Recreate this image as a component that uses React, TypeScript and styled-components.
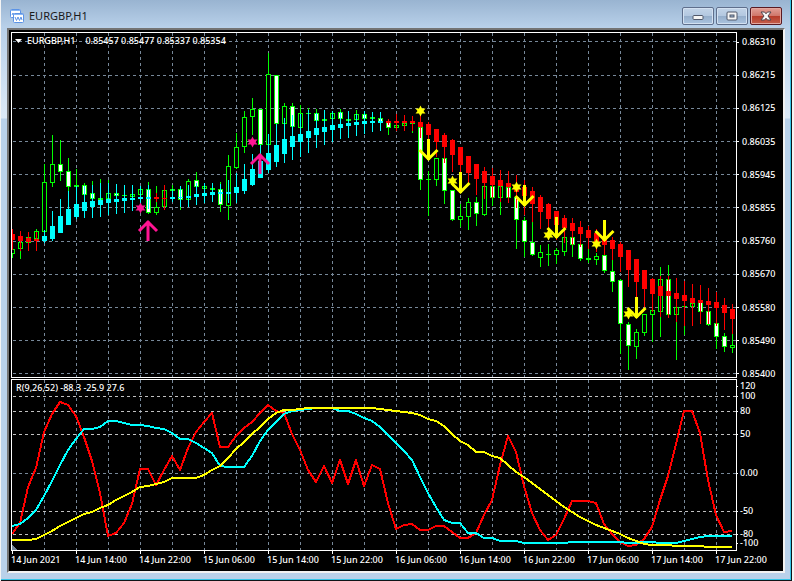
import React from 'react';
import styled, { createGlobalStyle, css } from 'styled-components';

const GlobalStyle = createGlobalStyle`
  * { box-sizing: border-box; }
  body { margin: 0; background: #f0f0f0; }
`;

const uiFont = css`
  font-family: 'Noto Sans', 'Open Sans', sans-serif;
`;

const Desktop = styled.div`
  ${uiFont}
  height: 100vh;
  min-height: 400px;
  padding: 0 2px 0 1px;
  background: #f4f4f4;
`;

const WindowFrame = styled.section`
  display: flex;
  flex-direction: column;
  height: 100%;
  border-right: 1px solid #101418;
  border-bottom: 1px solid #101418;
`;

const WindowBody = styled.div`
  flex: 1;
  min-height: 0;
  display: flex;
  flex-direction: column;
  padding: 0 6px 6px;
  border-right: 1px solid #35c5e8;
  border-bottom: 1px solid #35c5e8;
  background: linear-gradient(#9ab5d2 0, #b9d1ea 30px, #d6e5f5 100px, #dce9f7 118px, #b9d1ea 119px);
`;

const TitleBar = styled.header`
  display: flex;
  align-items: center;
  gap: 5px;
  height: 28px;
  margin: 0 -6px;
  padding: 4px 8px 0 9px;
  background: linear-gradient(#99b4d1, #b9d1ea);
`;

const Title = styled.h1`
  flex: 1;
  margin: 0;
  font-size: 11px;
  line-height: 16px;
  font-weight: 400;
  color: #1a1a1a;
`;

const Buttons = styled.div`
  display: flex;
  gap: 2px;
`;

const WindowButton = styled.button<{ $danger?: boolean }>`
  display: grid;
  place-items: center;
  width: 32px;
  height: 18px;
  padding: 0;
  border: 1px solid ${p => (p.$danger ? '#5a1a22' : '#5f6f8c')};
  border-radius: 2px;
  box-shadow: inset 0 0 0 1px ${p => (p.$danger ? '#e3a79f' : '#d3e1f1')};
  background: ${p =>
    p.$danger
      ? 'linear-gradient(#e2a097 0, #d0776b 48%, #b63a28 50%, #c4604c 100%)'
      : 'linear-gradient(#c3d4e8 0, #b3c8e0 48%, #94adca 50%, #abc4e0 100%)'};
`;

const Terminal = styled.main`
  flex: 1;
  min-height: 0;
  margin-right: -1px;
  display: grid;
  grid-template-columns: minmax(0, 1fr) 46px;
  grid-template-rows: 346fr 173fr 20px;
  padding: 2px 0 0 2px;
  border: 2px solid #747474;
  border-right-color: #f2f2f2;
  border-bottom-color: #f2f2f2;
  background: #000;
  color: #fff;
  font-size: 9px;
  font-weight: 500;
`;

const Pane = styled.figure<{ $spaced?: boolean }>`
  position: relative;
  min-height: 0;
  margin: ${p => (p.$spaced ? '1px 0 0' : '0')};
`;

const Plot = styled.svg`
  display: block;
  width: 100%;
  height: 100%;
`;

const Caption = styled.figcaption<{ $left: number }>`
  position: absolute;
  top: 2px;
  left: ${p => p.$left}px;
  display: flex;
  align-items: center;
  gap: 5px;
  line-height: 13px;
  white-space: nowrap;
`;

const Quotes = styled.span`
  padding-left: 5px;
`;

const PriceAxis = styled.ol`
  display: flex;
  flex-direction: column;
  justify-content: space-between;
  min-height: 0;
  margin: 0 0 -2px;
  padding: 4px 0 0;
  list-style: none;
  line-height: 12px;
`;

const Tick = styled.li<{ $long?: boolean }>`
  display: flex;
  align-items: center;
  gap: ${p => (p.$long ? 3 : 2)}px;
  height: 12px;

  &::before {
    content: '';
    width: ${p => (p.$long ? 2 : 1)}px;
    height: 1px;
    background: #fff;
  }
`;

const LevelAxis = styled(PriceAxis)`
  display: grid;
  grid-template-rows:
    minmax(0, 10fr) minmax(0, 15fr) minmax(0, 23fr) minmax(0, 39fr)
    minmax(0, 38fr) minmax(0, 23fr) minmax(0, 9fr) minmax(0, 14fr);
  margin: 0;
  padding: 2px 0 0;
`;

const TimeAxis = styled.ol`
  grid-column: 1 / -1;
  display: grid;
  grid-template-columns: repeat(12, minmax(0, 1fr));
  margin: 0;
  padding: 0 4px 0 0;
  list-style: none;
  line-height: 12px;
  white-space: nowrap;
`;

const TimeTick = styled.li`
  &::before {
    content: '';
    display: block;
    width: 1px;
    height: 3px;
    margin-left: 1px;
    background: #fff;
  }
`;

type Kind = 'h' | 'f' | 'd';
/* price: kind, high, top, bottom, low - trend: colour, high, top, bottom, low */
type Bar = [Kind, number, number, number, number, 'c' | 'r', number, number, number, number];

const bars: Bar[] = [
  ['h', 249, 249, 254, 257, 'r', 229, 234, 240, 250],
  ['h', 242, 242, 249, 258, 'r', 231, 236, 241, 251],
  ['h', 237, 237, 243, 243, 'r', 232, 238, 242, 251],
  ['h', 229, 231, 239, 243, 'r', 232, 239, 241, 251],
  ['h', 164, 182, 232, 232, 'c', 230, 236, 241, 243],
  ['h', 135, 164, 183, 186, 'c', 211, 226, 239, 241],
  ['f', 140, 164, 172, 180, 'c', 199, 216, 233, 233],
  ['f', 158, 171, 187, 191, 'c', 191, 209, 225, 225],
  ['d', 169, 185, 187, 187, 'c', 186, 204, 217, 219],
  ['f', 183, 185, 195, 195, 'c', 186, 202, 211, 218],
  ['f', 181, 193, 199, 199, 'c', 185, 201, 207, 218],
  ['d', 179, 198, 200, 200, 'c', 183, 200, 205, 217],
  ['h', 180, 193, 199, 199, 'c', 183, 199, 203, 215],
  ['f', 193, 193, 196, 196, 'c', 184, 199, 202, 214],
  ['d', 195, 195, 196, 196, 'c', 185, 198, 201, 213],
  ['h', 194, 194, 197, 197, 'c', 185, 198, 200, 211],
  ['h', 189, 189, 195, 195, 'c', 186, 197, 199, 211],
  ['f', 182, 189, 213, 213, 'c', 185, 197, 199, 209],
  ['h', 186, 207, 213, 214, 'r', 193, 197, 199, 202],
  ['h', 190, 190, 207, 207, 'r', 185, 198, 199, 210],
  ['d', 185, 189, 191, 191, 'c', 189, 197, 199, 202],
  ['f', 189, 189, 200, 209, 'c', 186, 197, 198, 207],
  ['h', 179, 181, 200, 200, 'c', 185, 196, 198, 207],
  ['f', 172, 180, 187, 187, 'c', 183, 194, 197, 205],
  ['h', 186, 186, 189, 189, 'c', 183, 193, 196, 203],
  ['d', 188, 188, 190, 190, 'c', 183, 192, 195, 202],
  ['f', 182, 189, 205, 211, 'c', 184, 192, 194, 202],
  ['h', 155, 166, 206, 219, 'c', 180, 192, 194, 203],
  ['h', 133, 147, 168, 168, 'c', 173, 187, 193, 203],
  ['h', 111, 117, 147, 152, 'c', 164, 179, 191, 194],
  ['h', 98, 109, 117, 134, 'c', 154, 169, 185, 186],
  ['f', 109, 109, 145, 145, 'c', 145, 161, 178, 178],
  ['h', 53, 74, 145, 145, 'c', 134, 153, 170, 173],
  ['f', 75, 75, 124, 124, 'c', 124, 145, 162, 167],
  ['h', 103, 106, 124, 124, 'c', 118, 139, 154, 163],
  ['f', 103, 106, 127, 127, 'c', 115, 136, 147, 160],
  ['h', 105, 113, 128, 128, 'c', 114, 134, 142, 157],
  ['d', 108, 113, 114, 114, 'c', 110, 131, 138, 153],
  ['f', 109, 113, 121, 121, 'c', 113, 128, 135, 148],
  ['d', 119, 119, 121, 121, 'c', 110, 127, 132, 145],
  ['h', 113, 113, 119, 119, 'c', 111, 125, 130, 142],
  ['f', 109, 112, 119, 119, 'c', 112, 124, 128, 139],
  ['d', 119, 119, 121, 121, 'c', 111, 123, 126, 138],
  ['h', 110, 114, 120, 120, 'c', 114, 122, 125, 136],
  ['f', 111, 114, 119, 119, 'c', 111, 121, 124, 134],
  ['d', 117, 117, 119, 119, 'c', 112, 121, 123, 132],
  ['f', 118, 118, 123, 123, 'c', 112, 121, 123, 131],
  ['f', 121, 121, 128, 134, 'r', 119, 121, 123, 125],
  ['h', 125, 125, 128, 128, 'r', 114, 121, 123, 131],
  ['h', 123, 123, 126, 126, 'r', 115, 121, 123, 131],
  ['h', 121, 121, 124, 132, 'r', 116, 121, 123, 131],
  ['f', 127, 127, 180, 189, 'r', 113, 122, 127, 138],
  ['d', 171, 179, 180, 215, 'r', 122, 124, 135, 150],
  ['h', 158, 158, 180, 185, 'r', 129, 129, 142, 157],
  ['f', 158, 158, 191, 203, 'r', 133, 135, 147, 163],
  ['f', 190, 190, 220, 220, 'r', 139, 140, 155, 172],
  ['h', 204, 216, 220, 226, 'r', 147, 147, 165, 173],
  ['h', 198, 202, 217, 229, 'r', 156, 156, 173, 183],
  ['f', 197, 202, 214, 225, 'r', 164, 164, 179, 195],
  ['h', 186, 186, 215, 215, 'r', 167, 171, 183, 199],
  ['f', 186, 186, 198, 205, 'r', 168, 176, 185, 198],
  ['h', 186, 186, 198, 214, 'r', 170, 180, 186, 202],
  ['f', 187, 187, 198, 198, 'r', 171, 183, 187, 203],
  ['f', 197, 197, 220, 248, 'r', 175, 185, 192, 208],
  ['f', 217, 220, 242, 256, 'r', 180, 187, 196, 215],
  ['f', 222, 242, 255, 255, 'r', 187, 191, 204, 222],
  ['h', 245, 252, 258, 266, 'r', 195, 197, 212, 229],
  ['d', 244, 254, 255, 265, 'r', 203, 204, 219, 235],
  ['h', 248, 250, 255, 263, 'r', 211, 211, 225, 240],
  ['h', 237, 237, 252, 255, 'r', 215, 218, 228, 243],
  ['f', 237, 237, 245, 256, 'r', 218, 223, 231, 245],
  ['f', 244, 244, 259, 260, 'r', 221, 227, 234, 247],
  ['d', 249, 258, 260, 262, 'r', 226, 230, 238, 249],
  ['h', 253, 256, 260, 264, 'r', 229, 233, 242, 252],
  ['f', 255, 255, 271, 272, 'r', 233, 236, 245, 255],
  ['f', 260, 271, 282, 291, 'r', 237, 240, 249, 260],
  ['f', 279, 280, 324, 353, 'r', 242, 244, 257, 272],
  ['f', 322, 324, 346, 369, 'r', 250, 250, 270, 287],
  ['h', 329, 332, 347, 358, 'r', 259, 259, 282, 298],
  ['h', 314, 314, 333, 335, 'r', 270, 270, 289, 310],
  ['h', 310, 310, 315, 341, 'r', 278, 279, 294, 312],
  ['h', 267, 279, 312, 336, 'r', 276, 286, 296, 317],
  ['f', 265, 279, 315, 315, 'r', 276, 291, 296, 318],
  ['h', 307, 307, 315, 359, 'r', 278, 293, 299, 322],
  ['d', 306, 306, 307, 334, 'r', 281, 295, 301, 326],
  ['h', 303, 303, 307, 307, 'r', 284, 298, 303, 326],
  ['f', 302, 302, 312, 312, 'r', 285, 300, 303, 324],
  ['f', 311, 311, 325, 325, 'r', 288, 301, 305, 324],
  ['f', 323, 323, 337, 348, 'r', 292, 302, 308, 326],
  ['f', 333, 336, 347, 351, 'r', 298, 305, 313, 330],
  ['h', 334, 345, 348, 352, 'r', 304, 309, 319, 334],
];

const fast = [
  534, 523, 487, 468, 432, 414, 402, 405, 416, 437, 461, 493, 536, 533, 523, 504, 469, 469, 485, 470,
  456, 470, 448, 432, 422, 413, 447, 447, 436, 428, 422, 413, 405, 411, 413, 434, 450, 470, 482, 466,
  483, 460, 484, 460, 486, 465, 469, 503, 529, 525, 524, 530, 530, 526, 526, 532, 538, 538, 533, 515,
  500, 465, 436, 452, 486, 513, 530, 540, 535, 519, 501, 501, 501, 503, 524, 534, 542, 546, 545, 539,
  527, 500, 476, 444, 411, 411, 433, 480, 515, 532, 531,
];

const medium = [
  526, 524, 518, 510, 496, 481, 465, 450, 439, 429, 429, 427, 421, 421, 423, 425, 425, 426, 428, 429,
  433, 439, 439, 443, 448, 453, 466, 467, 467, 467, 456, 441, 430, 422, 414, 411, 410, 409, 408, 408,
  408, 411, 411, 414, 418, 421, 427, 435, 443, 451, 460, 477, 493, 507, 520, 523, 523, 533, 533, 538,
  538, 541, 541, 541, 543, 543, 543, 543, 543, 543, 542, 542, 542, 542, 542, 542, 542, 543, 543, 542,
  542, 543, 543, 543, 541, 539, 537, 536, 536, 536, 536,
];

const slow = [
  540, 540, 540, 539, 535, 531, 526, 522, 518, 514, 512, 508, 505, 500, 496, 492, 487, 486, 484, 482,
  478, 478, 478, 478, 475, 470, 466, 458, 449, 442, 434, 427, 419, 413, 410, 410, 409, 408, 408, 408,
  408, 408, 408, 408, 408, 408, 409, 410, 411, 412, 413, 415, 419, 421, 426, 434, 441, 445, 452, 452,
  456, 458, 465, 472, 477, 483, 489, 495, 501, 507, 512, 517, 521, 525, 528, 531, 534, 538, 541, 544,
  545, 545, 545, 546, 546, 546, 546, 547, 547, 547, 547,
];

const barX = (i: number) => 12 + i * 8;
const toPoints = (ys: number[]) => ys.map((y, i) => `${barX(i)},${y}`).join(' ');

const gridX = Array.from({ length: 22 }, (_, i) => 44 + i * 32);
const gridY = [41, 75, 108, 141, 174, 207, 241, 274, 307, 340, 373];
const prices = ['0.86310', '0.86215', '0.86125', '0.86035', '0.85945', '0.85855', '0.85760', '0.85670', '0.85580', '0.85490', '0.85400'];
const levels = ['120', '100', '80', '50', '0.00', '-50', '-80', '-100'];
const times = [
  '14 Jun 2021', '14 Jun 14:00', '14 Jun 22:00', '15 Jun 06:00', '15 Jun 14:00', '15 Jun 22:00',
  '16 Jun 06:00', '16 Jun 14:00', '16 Jun 22:00', '17 Jun 06:00', '17 Jun 14:00', '17 Jun 22:00',
];

const PINK = '#ff1493';
const YELLOW = '#ffff00';
const LIME = '#00ff00';
const SLATE = '#778899';

const stars: [number, number, string][] = [
  [140, 208, PINK], [252, 142, PINK], [420, 111, YELLOW], [452, 181, YELLOW],
  [516, 187, YELLOW], [548, 235, YELLOW], [596, 244, YELLOW], [628, 314, YELLOW],
];
const upArrows = [[148, 221], [260, 154]];
const downArrows = [[428, 160], [460, 193], [524, 206], [556, 238], [604, 241], [636, 318]];

function Verticals({ top, bottom }: { top: number; bottom: number }) {
  return (
    <g stroke={SLATE} strokeDasharray="3 3">
      {gridX.map(x => <line key={x} x1={x + 0.5} x2={x + 0.5} y1={top} y2={bottom} />)}
    </g>
  );
}

function Candle({ bar, x }: { bar: Bar; x: number }) {
  const [kind, high, top, bottom, low, tone, tHigh, tTop, tBottom, tLow] = bar;
  const trend = tone === 'c' ? '#00ffff' : '#ff0000';
  return (
    <g>
      <rect x={x} y={high} width={1} height={top - high} fill={LIME} />
      <rect x={x} y={bottom} width={1} height={low - bottom + 1} fill={LIME} />
      {kind === 'd' ? (
        <rect x={x - 2} y={top} width={5} height={Math.max(bottom - top, 1)} fill={LIME} />
      ) : (
        <rect
          x={x - 1.5}
          y={top + 0.5}
          width={4}
          height={bottom - top - 1}
          fill={kind === 'f' ? '#fff' : '#000'}
          stroke={LIME}
        />
      )}
      <rect x={x} y={tHigh} width={1} height={tLow - tHigh} fill={trend} />
      <rect x={x - 2} y={tTop} width={5} height={tBottom - tTop} fill={trend} />
    </g>
  );
}

function PriceChart() {
  return (
    <Plot viewBox="11 32 726 346" preserveAspectRatio="none" role="img" aria-label="EURGBP hourly candles">
      <g shapeRendering="crispEdges">
        <Verticals top={33} bottom={377} />
        <g stroke={SLATE} strokeDasharray="3 3">
          {gridY.map(y => <line key={y} x1={13} x2={736} y1={y + 0.5} y2={y + 0.5} />)}
        </g>
        {bars.map((bar, i) => <Candle key={i} bar={bar} x={barX(i)} />)}
      </g>
      {stars.map(([x, y, fill]) => (
        <path
          key={x}
          transform={`translate(${x} ${y})`}
          fill={fill}
          d="M.5-5.500 2-2.500H5.500L3.500 0 5.500 2.500H2L.500 5.500-1 2.500H-4.500L-2.500 0-4.500-2.500H-1Z"
        />
      ))}
      <g fill="none" stroke={PINK} strokeWidth={3}>
        {upArrows.map(([x, y]) => (
          <path key={x} transform={`translate(${x} ${y})`} d="M0 20V0M-9 10 0 1 9 10" />
        ))}
      </g>
      <g fill="none" stroke={YELLOW} strokeWidth={3}>
        {downArrows.map(([x, y]) => (
          <path key={x} transform={`translate(${x} ${y})`} d="M.5-21V0M-8.500-10 .5-1 9.500-10" />
        ))}
      </g>
      <rect x={11.5} y={32.5} width={725} height={345} fill="none" stroke="#fff" shapeRendering="crispEdges" />
    </Plot>
  );
}

function OscillatorChart() {
  return (
    <Plot viewBox="11 379 726 172" preserveAspectRatio="none" role="img" aria-label="R oscillator">
      <g shapeRendering="crispEdges" fill="none">
        <Verticals top={380} bottom={550} />
        <line x1={13} x2={736} y1={473.5} y2={473.5} stroke={SLATE} strokeDasharray="3 3" />
        <g stroke="#c0c0c0" strokeDasharray="3 3">
          {[396, 411, 434, 511, 534].map(y => <line key={y} x1={13} x2={736} y1={y + 0.5} y2={y + 0.5} />)}
        </g>
        <path d="M12 545 17 550H12Z" fill={SLATE} />
        <g strokeWidth={2} strokeLinejoin="round">
          <polyline points={toPoints(fast)} stroke="#ff0000" />
          <polyline points={toPoints(medium)} stroke="#00ffff" />
          <polyline points={toPoints(slow)} stroke={YELLOW} />
        </g>
        <rect x={11.5} y={379.5} width={725} height={171} stroke="#fff" />
      </g>
    </Plot>
  );
}

function ChartIcon() {
  return (
    <svg width="14" height="14" viewBox="0 0 14 14" fill="#fff" stroke="#5b93e6" aria-hidden="true">
      <rect x=".5" y=".5" width="10" height="8" rx="1" />
      <path d="M1 1.500h9" stroke="#8ab6f2" />
      <path d="M2 6l1-2 1 2" fill="none" />
      <rect x="3.500" y="4.500" width="10" height="9" rx="1" />
      <path d="M4 5.500h9" stroke="#8ab6f2" />
      <path d="M5 8l1.500 3.500L8 8l1.500 3.500L11 8l1 3" fill="none" />
    </svg>
  );
}

export default function App() {
  return (
    <>
      <GlobalStyle />
      <Desktop>
        <WindowFrame>
          <WindowBody>
            <TitleBar>
              <ChartIcon />
              <Title>EURGBP,H1</Title>
              <Buttons>
                <WindowButton type="button" aria-label="Minimize">
                  <svg width="12" height="12" viewBox="0 0 12 12">
                    <rect x="1" y="5.500" width="10" height="4" rx="1" fill="#f5f5f5" stroke="#50586a" />
                  </svg>
                </WindowButton>
                <WindowButton type="button" aria-label="Restore">
                  <svg width="12" height="12" viewBox="0 0 12 12" fill="#f5f5f5" stroke="#50586a">
                    <rect x="1" y="2" width="10" height="8" rx="1" />
                    <rect x="4" y="5" width="4" height="2" fill="#9db6d3" />
                  </svg>
                </WindowButton>
                <WindowButton type="button" aria-label="Close" $danger>
                  <svg width="12" height="12" viewBox="0 0 12 12">
                    <path
                      d="M1 2H4.500L6 3.800 7.500 2H11L8 6 11 10H7.500L6 8.200 4.500 10H1L4 6Z"
                      fill="#f7f7f7"
                      stroke="#50464f"
                      strokeLinejoin="round"
                    />
                  </svg>
                </WindowButton>
              </Buttons>
            </TitleBar>
            <Terminal>
              <Pane>
                <PriceChart />
                <Caption $left={4}>
                  <svg width="7" height="4" viewBox="0 0 7 4" aria-hidden="true">
                    <path d="M0 0h7L3.500 4Z" fill="#fff" />
                  </svg>
                  <span>EURGBP,H1</span>
                  <Quotes>0.85457 0.85477 0.85337 0.85354</Quotes>
                </Caption>
              </Pane>
              <PriceAxis>
                {prices.map(price => <Tick key={price} $long>{price}</Tick>)}
              </PriceAxis>
              <Pane $spaced>
                <OscillatorChart />
                <Caption $left={5}>R(9,26,52) -88.3 -25.9 27.6</Caption>
              </Pane>
              <LevelAxis>
                {levels.map(level => <Tick key={level}>{level}</Tick>)}
              </LevelAxis>
              <TimeAxis>
                {times.map(time => <TimeTick key={time}>{time}</TimeTick>)}
              </TimeAxis>
            </Terminal>
          </WindowBody>
        </WindowFrame>
      </Desktop>
    </>
  );
}
